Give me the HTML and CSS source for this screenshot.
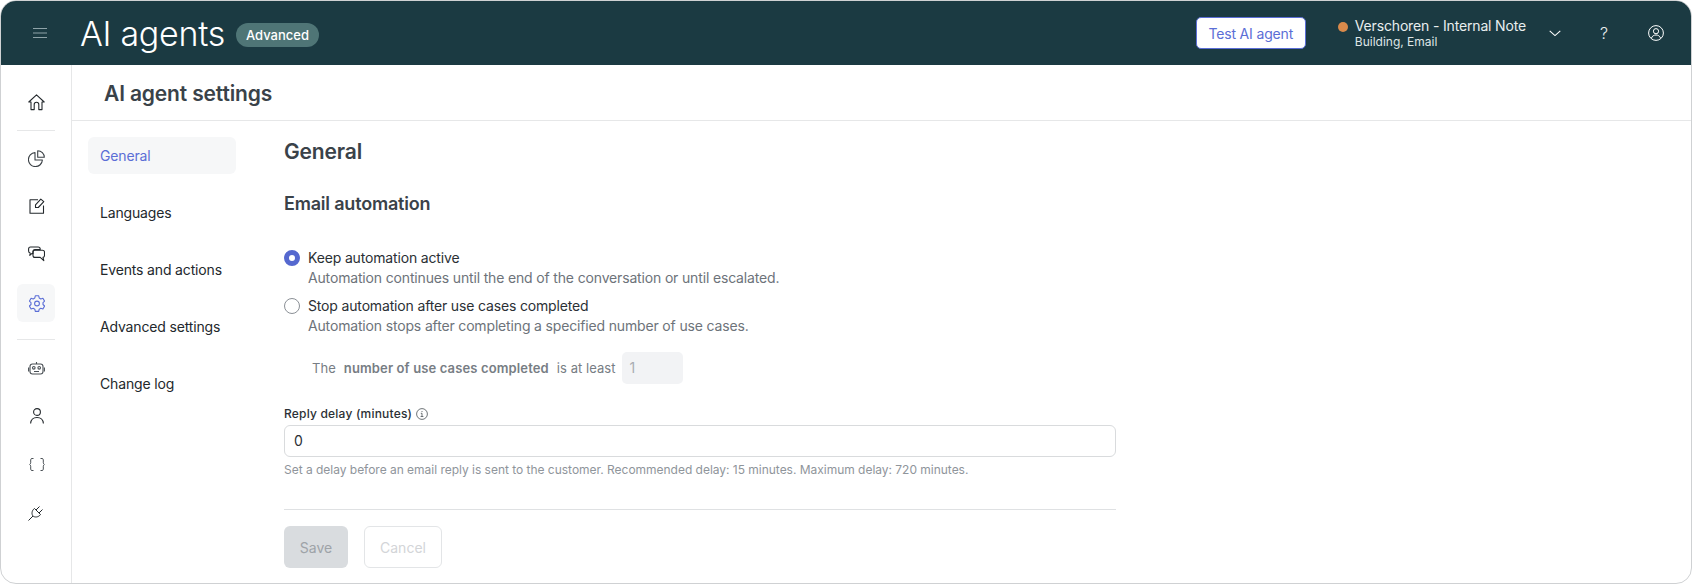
FILE: index.html
```html
<!DOCTYPE html>
<html lang="en">
<head>
<meta charset="utf-8">
<title>AI agents</title>
<link rel="stylesheet" href="styles.css">
</head>
<body>
<div class="app">
  <header class="topbar">
    <button class="menu-btn" aria-label="Menu">
      <svg width="14" height="10" viewBox="0 0 14 10" fill="none" stroke="#8fa3a8" stroke-width="1"><path d="M0 .5h14M0 5h14M0 9.500h14"/></svg>
    </button>
    <h1 class="app-title">AI agents</h1>
    <span class="badge">Advanced</span>
    <div class="spacer"></div>
    <button class="test-btn">Test AI agent</button>
    <div class="agent">
      <span class="dot"></span>
      <div class="agent-text">
        <div class="agent-name">Verschoren - Internal Note</div>
        <div class="agent-sub">Building, Email</div>
      </div>
    </div>
    <svg class="chev" width="12" height="7" viewBox="0 0 12 7" fill="none" stroke="#fff" stroke-width="1.100"><path d="M.7.8 6 5.600 11.300.8"/></svg>
    <span class="help">?</span>
    <svg class="user" width="16" height="16" viewBox="0 0 16 16" fill="none" stroke="#fff" stroke-width="1"><circle cx="8" cy="8" r="7.400"/><circle cx="8" cy="6.200" r="2.600"/><path d="M3.400 13.200c.7-2.200 2.500-3.200 4.600-3.200s3.900 1 4.600 3.200"/></svg>
  </header>
  <div class="body">
    <nav class="rail">
      <a class="rail-item"><svg width="17" height="17" viewBox="0 0 17 17" fill="none" stroke="#23282c" stroke-width="1.100" stroke-linejoin="round"><path d="M.8 8 8.500.8 16.200 8h-2.200v7.600h-3.200v-5a2.300 2.300 0 0 0-4.600 0v5H3V8z"/></svg></a>
      <div class="rail-sep"></div>
      <a class="rail-item"><svg width="17" height="17" viewBox="0 0 17 17" fill="none" stroke="#3a4045" stroke-width="1.100" stroke-linejoin="round"><path d="M7 2.600a7 7 0 1 0 7.400 7.400H7z"/><path d="M9.700.7a6.600 6.600 0 0 1 6.600 6.600H9.700z"/></svg></a>
      <a class="rail-item"><svg width="16" height="16" viewBox="0 0 16 16" fill="none" stroke="#23282c" stroke-width="1.100" stroke-linejoin="round"><path d="M9 1.800H1v13.400h13.500V7.500"/><path d="M6.500 9.500V6.800L11.800 1.200l3 2.500-5.500 5.800z"/></svg></a>
      <a class="rail-item"><svg width="17" height="16" viewBox="0 0 17 16" fill="none" stroke="#23282c" stroke-width="1.100" stroke-linejoin="round"><path d="M2.500 1h7.500c1.500 0 2.200 1 2.200 2v.6H7c-1.300 0-2 .9-2 2v2H3.700L1.800 9.300 2.200 7C1 6.800.6 6 .6 5V3c0-1.200.8-2 1.900-2z"/><path d="M7 4.200h7.500c1.300 0 2 .9 2 2v3.200c0 1-.5 1.800-1.500 2l.8 3.300-3.600-3.300H7c-1.200 0-2-.8-2-2V6.200c0-1.100.8-2 2-2z"/></svg></a>
      <a class="rail-item is-active"><svg width="16" height="17" viewBox="0 0 16 17" fill="none" stroke="#5b6ed6" stroke-width="1.100" stroke-linejoin="round"><path d="M6.300.8h3.400l.5 2.200 1.600.9 2.100-.7 1.700 3-1.600 1.500v1.800l1.600 1.500-1.700 3-2.100-.7-1.600.9-.5 2.200H6.300l-.5-2.200-1.600-.9-2.100.7-1.700-3 1.600-1.500V7.700L.4 6.200l1.700-3 2.100.7 1.600-.9z"/><circle cx="8" cy="8.500" r="2.400"/></svg></a>
      <div class="rail-sep rail-sep-low"></div>
      <a class="rail-item"><svg width="17" height="14" viewBox="0 0 17 14" fill="none" stroke="#4a5055" stroke-width="1.100"><rect x="2" y="3" width="13" height="10" rx="2.500"/><path d="M8.500 3V1M.6 6.500v4M16.400 6.500v4M6 10.500h5"/><circle cx="5.800" cy="6.800" r="1.300"/><circle cx="11.200" cy="6.800" r="1.300"/></svg></a>
      <a class="rail-item"><svg width="14" height="16" viewBox="0 0 14 16" fill="none" stroke="#23282c" stroke-width="1.100"><circle cx="7" cy="4" r="3.400"/><path d="M.6 15.500c.3-3.700 2.900-6 6.400-6s6.100 2.300 6.400 6"/></svg></a>
      <a class="rail-item"><svg width="16" height="13" viewBox="0 0 16 13" fill="none" stroke="#4a5055" stroke-width="1"><path d="M4.500.5H3c-.8 0-1.300.5-1.300 1.200v3.100c0 .8-.4 1.300-1.100 1.700.7.400 1.100.9 1.100 1.700v3.100c0 .7.500 1.200 1.300 1.200h1.500M11.500.5H13c.8 0 1.300.5 1.300 1.200v3.100c0 .8.400 1.300 1.100 1.700-.7.400-1.100.9-1.100 1.700v3.100c0 .7-.5 1.200-1.300 1.200h-1.500"/></svg></a>
      <a class="rail-item"><svg width="17" height="17" viewBox="0 0 17 17" fill="none" stroke="#23282c" stroke-width="1" stroke-linejoin="round"><path d="M.5 16.500 5 12M6.500 4.500l6 6C10.500 13.500 6.500 13.500 5 12 3.500 10.500 3.500 6.500 6.500 4.500zM8 6l3.500-3.500M11 9l3.500-3.500"/></svg></a>
    </nav>
    <main class="main">
      <div class="page-head"><h2 class="page-title">AI agent settings</h2></div>
      <div class="content">
        <aside class="subnav">
          <a class="subnav-item is-active">General</a>
          <a class="subnav-item">Languages</a>
          <a class="subnav-item">Events and actions</a>
          <a class="subnav-item">Advanced settings</a>
          <a class="subnav-item">Change log</a>
        </aside>
        <section class="form">
          <h3 class="section-title">General</h3>
          <h4 class="sub-title">Email automation</h4>
          <div class="radio-row first">
            <span class="radio is-on"></span>
            <div>
              <div class="radio-label">Keep automation active</div>
              <div class="radio-desc">Automation continues until the end of the conversation or until escalated.</div>
            </div>
          </div>
          <div class="radio-row">
            <span class="radio"></span>
            <div>
              <div class="radio-label">Stop automation after use cases completed</div>
              <div class="radio-desc">Automation stops after completing a specified number of use cases.</div>
            </div>
          </div>
          <div class="rule-row">
            <span>The</span><strong>number of use cases completed</strong><span>is at least</span>
            <div class="mini-input">1</div>
          </div>
          <div class="field-label">
            <span>Reply delay (minutes)</span>
            <svg width="12" height="12" viewBox="0 0 12 12" fill="none" stroke="#4a5055" stroke-width=".8"><circle cx="6" cy="6" r="5.400"/><path d="M4.800 5.300H6v3.200M4.600 8.500h2.800"/><path d="M6 3v.8" stroke-width="1"/></svg>
          </div>
          <div class="text-input">0</div>
          <p class="hint">Set a delay before an email reply is sent to the customer. Recommended delay: 15 minutes. Maximum delay: 720 minutes.</p>
          <div class="actions">
            <button class="btn btn-save">Save</button>
            <button class="btn btn-cancel">Cancel</button>
          </div>
        </section>
      </div>
    </main>
  </div>
</div>
</body>
</html>
```
FILE: styles.css
```css
* { box-sizing: border-box; }
html, body { margin: 0; height: 100%; background: #fff; }
body { font-family: Inter, "Liberation Sans", sans-serif; color: #23282c; overflow: hidden; }
h1, h2, h3, h4, p { margin: 0; }
button { font-family: inherit; }

.app {
  width: 1692px; height: 584px;
  display: flex; flex-direction: column;
  border: 1px solid #cfd1d3; border-radius: 16px; overflow: hidden;
}
.topbar {
  height: 64px; flex: none;
  display: flex; align-items: center;
  background: #1b3a42; color: #fff;
}
.menu-btn { width: 14px; height: 10px; margin: 0 0 1px 32px; padding: 0; border: 0; background: none; display: flex; }
.app-title { margin: 2px 0 0 33px; font-size: 34px; font-weight: 300; line-height: 44px; letter-spacing: -.3px; }
.badge {
  margin: 3px 0 0 11px; height: 24px; padding: 0 10px; border-radius: 12px;
  background: #4f7576; font-size: 13px; font-weight: 500; line-height: 24px;
}
.spacer { flex: 1; }
.test-btn {
  width: 110px; height: 32px; border: 1px solid #5b6ed6; border-radius: 5px; background: #fff;
  color: #5b6ed6; font-size: 14px; letter-spacing: -.16px; padding: 0;
}
.agent { display: flex; margin-left: 32px; }
.dot { width: 10px; height: 10px; margin: 5px 7px 0 0; border-radius: 50%; background: #d98a4b; }
.agent-name { font-size: 14px; line-height: 17px; letter-spacing: -.16px; color: #e9eeef; }
.agent-sub { font-size: 12px; line-height: 15px; color: #dfe5e6; }
.chev { margin-left: 23px; }
.help { margin-left: 39px; width: 9px; font-size: 16px; font-weight: 300; color: #e9eeef; }
.user { margin-left: 39px; margin-right: 27px; }

.body { flex: 1; display: flex; min-height: 0; }
.rail {
  width: 71px; flex: none; border-right: 1px solid #e6e7e8;
  display: flex; flex-direction: column; align-items: center; padding-top: 18px;
}
.rail-item { width: 38px; height: 38px; padding-left: 1px; display: flex; align-items: center; justify-content: center; border-radius: 6px; flex: none; }
.rail-item + .rail-item { margin-top: 10px; }
.rail-item.is-active { background: #f6f7f8; margin-top: 11px; }
.rail-sep { width: 38px; height: 1px; background: #e6e7e8; margin: 9px 0 8px; flex: none; }
.rail-sep-low { margin: 17px 0 9px; }
.rail-sep + .rail-item { margin-top: 0; }

.main { flex: 1; display: flex; flex-direction: column; min-width: 0; }
.page-head { height: 56px; flex: none; border-bottom: 1px solid #e6e7e8; padding: 14px 0 0 32px; }
.page-title { font-size: 21px; font-weight: 600; line-height: 29px; letter-spacing: -.15px; color: #3a4249; }
.content { flex: 1; display: flex; min-height: 0; }
.subnav { width: 212px; flex: none; padding: 16px 0 0 16px; display: flex; flex-direction: column; gap: 20px; }
.subnav-item { width: 148px; height: 37px; padding-left: 12px; border-radius: 6px; font-size: 14px; line-height: 37px; letter-spacing: -.16px; color: #23282c; }
.subnav-item.is-active { background: #f6f7f8; color: #5b6ed6; }

.form { width: 832px; padding-top: 16px; }
.section-title { font-size: 21px; font-weight: 600; line-height: 30px; letter-spacing: -.15px; color: #3a4249; }
.sub-title { margin-top: 25px; font-size: 18px; font-weight: 600; line-height: 24px; letter-spacing: -.2px; color: #3a4249; }
.radio-row { display: flex; gap: 8px; margin-top: 9px; }
.radio-row.first { margin-top: 32px; }
.radio { width: 16px; height: 16px; margin-top: 2px; flex: none; border: 1px solid #8b9096; border-radius: 50%; background: #fff; }
.radio.is-on { border: 5.5px solid #5568cf; }
.radio-label { font-size: 14px; line-height: 19px; letter-spacing: -.16px; color: #2b3035; }
.radio-desc { margin-top: 1px; font-size: 14px; line-height: 19px; letter-spacing: -.16px; color: #6d737a; }
.rule-row { display: flex; align-items: center; height: 32px; margin: 17px 0 0 28px; font-size: 13px; letter-spacing: .05px; color: #777d84; }
.rule-row strong { margin: 0 8px 0 8px; font-weight: 600; letter-spacing: .13px; }
.mini-input { width: 61px; height: 32px; margin-left: 6px; padding-left: 8px; border-radius: 5px; background: #f2f3f5; color: #a9adb2; font-size: 14px; line-height: 32px; }
.field-label { display: flex; align-items: center; gap: 4px; margin-top: 22px; font-size: 12px; font-weight: 500; line-height: 16px; letter-spacing: .2px; color: #2b3035; }
.text-input { height: 32px; margin-top: 3px; padding-left: 9px; border: 1px solid #d9dbdd; border-radius: 6px; font-size: 14px; line-height: 30px; color: #2b3035; }
.hint { margin-top: 5px; font-size: 12px; line-height: 16px; letter-spacing: -.02px; color: #8f959b; }
.actions { margin-top: 31px; padding-top: 16px; border-top: 1px solid #dfe1e3; display: flex; gap: 16px; }
.btn { height: 42px; border-radius: 6px; font-size: 14px; padding: 0; }
.btn-save { width: 64px; border: 0; background: #d9dcdf; color: #9ea3a8; }
.btn-cancel { width: 78px; border: 1px solid #e3e5e7; background: #fff; color: #d3d5d8; }
```
